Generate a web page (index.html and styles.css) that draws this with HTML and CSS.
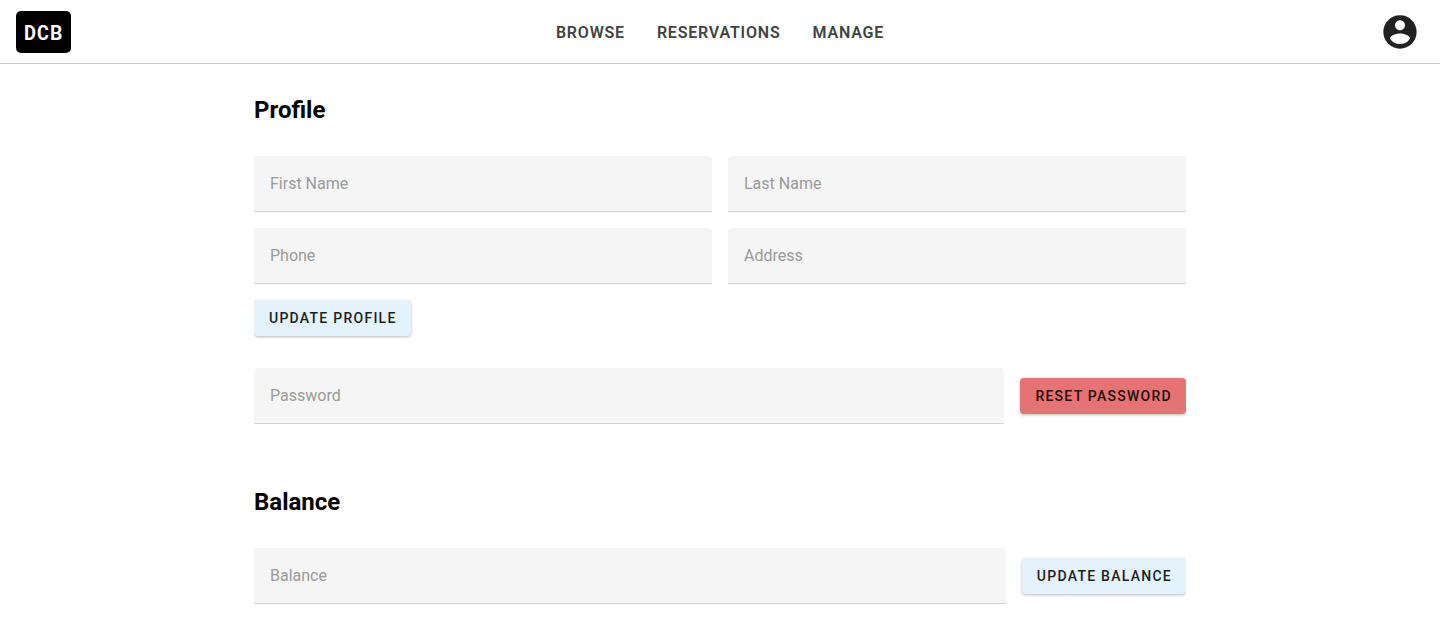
FILE: index.html
```html
<!DOCTYPE html>
<html lang="en">
<head>
<meta charset="utf-8">
<title>Profile</title>
<link rel="stylesheet" href="styles.css">
</head>
<body>
<header class="header">
  <a class="logo" href="#">DCB</a>
  <nav class="nav">
    <a href="#">Browse</a>
    <a href="#">Reservations</a>
    <a href="#">Manage</a>
  </nav>
  <button class="account" type="button" aria-label="Account">
    <svg viewBox="0 0 24 24" width="40" height="40" aria-hidden="true"><path fill="currentColor" d="M12 2C6.480 2 2 6.480 2 12s4.480 10 10 10 10-4.480 10-10S17.520 2 12 2zm0 3c1.660 0 3 1.340 3 3s-1.340 3-3 3-3-1.340-3-3 1.340-3 3-3zm0 14.200c-2.500 0-4.710-1.280-6-3.220.030-1.990 4-3.080 6-3.080 1.990 0 5.970 1.090 6 3.080-1.290 1.940-3.500 3.220-6 3.220z"/></svg>
  </button>
</header>
<main class="content">
  <section class="section">
    <h2 class="title">Profile</h2>
    <form class="profile">
      <input class="field" type="text" placeholder="First Name" aria-label="First Name">
      <input class="field" type="text" placeholder="Last Name" aria-label="Last Name">
      <input class="field" type="text" placeholder="Phone" aria-label="Phone">
      <input class="field" type="text" placeholder="Address" aria-label="Address">
      <button class="button" type="button">Update Profile</button>
    </form>
    <form class="row">
      <input class="field" type="password" placeholder="Password" aria-label="Password">
      <button class="button danger" type="button">Reset Password</button>
    </form>
  </section>
  <section class="section">
    <h2 class="title">Balance</h2>
    <form class="row">
      <input class="field" type="text" placeholder="Balance" aria-label="Balance">
      <button class="button" type="button">Update Balance</button>
    </form>
  </section>
</main>
</body>
</html>
```
FILE: styles.css
```css
* { box-sizing: border-box; }
body {
  margin: 0;
  background: #fff;
  color: #000;
  font-family: Roboto, sans-serif;
}
.header {
  display: grid;
  grid-template-columns: 1fr auto 1fr;
  align-items: center;
  height: 64px;
  padding: 0 16px;
  border-bottom: 1px solid #c8c8c8;
}
.logo {
  justify-self: start;
  padding: 1px 8px 0;
  border-radius: 5px;
  background: #000;
  color: #fff;
  font-family: "Roboto Mono", "Liberation Mono", monospace;
  font-size: 20px;
  font-weight: 700;
  line-height: 41px;
  letter-spacing: 1px;
  text-decoration: none;
}
.nav {
  display: flex;
  gap: 32px;
  padding-top: 1px;
}
.nav a {
  color: #424242;
  font-size: 16px;
  font-weight: 600;
  letter-spacing: 0.05em;
  text-decoration: none;
  text-transform: uppercase;
}
.account {
  display: flex;
  justify-self: end;
  margin-right: 4px;
  padding: 0;
  border: 0;
  background: none;
  color: #212121;
}
.content {
  max-width: 964px;
  margin: 0 auto;
  padding: 32px 16px;
}
.section {
  overflow-x: clip;
}
.section + .section {
  margin-top: 64px;
}
.title {
  margin: 0 0 32px;
  font-size: 24px;
  font-weight: 700;
  line-height: 28px;
}
.profile {
  display: grid;
  grid-template-columns: 1fr 1fr;
  gap: 16px;
  justify-items: start;
  margin-bottom: 32px;
}
.row {
  display: flex;
  align-items: center;
  gap: 16px;
}
.field {
  width: 100%;
  min-width: 0;
  height: 56px;
  padding: 0 16px;
  border: 0;
  border-bottom: 1px solid #d4d4d4;
  border-radius: 4px 4px 0 0;
  outline: 0;
  background: #f5f5f5;
  color: #212121;
  font: 400 16px Roboto, sans-serif;
}
.field::placeholder {
  color: #9a9a9a;
  opacity: 1;
}
.button {
  flex: none;
  height: 36px;
  padding: 0 14px 0 15px;
  border: 0;
  border-radius: 4px;
  background: #e3f2fd;
  color: #1c1f20;
  box-shadow: 0 1px 3px rgba(0, 0, 0, 0.28);
  font: 500 14px Roboto, sans-serif;
  letter-spacing: 0.09em;
  text-transform: uppercase;
}
.danger {
  background: #e57373;
  color: #201010;
}
```
